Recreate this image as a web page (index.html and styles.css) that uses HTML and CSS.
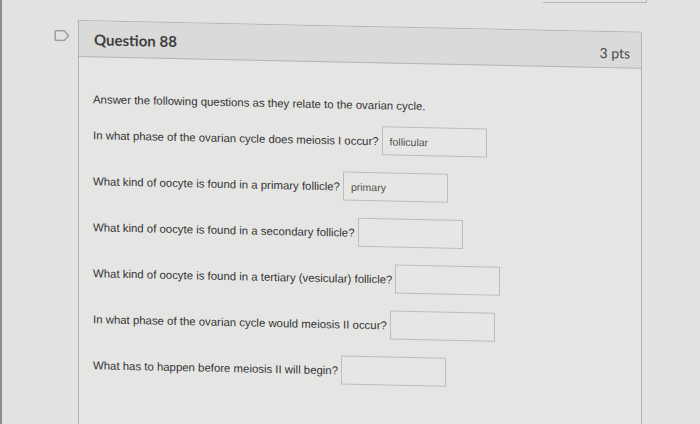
FILE: index.html
```html
<!DOCTYPE html>
<html lang="en">
<head>
<meta charset="utf-8">
<title>Question 88</title>
<link rel="stylesheet" href="styles.css">
</head>
<body>
<div class="screen">
  <div class="prev-card"></div>
  <div class="question">
    <div class="flag">
      <svg width="16" height="12" viewBox="0 0 16 12" aria-hidden="true">
        <path d="M2 1.2 H10.2 L14.6 6 L10.2 10.8 H2 Q1.2 10.8 1.2 10 V2 Q1.2 1.2 2 1.2 Z" fill="none" stroke="#9d9d9b" stroke-width="1.5" stroke-linejoin="round"/>
      </svg>
    </div>
    <div class="card">
      <div class="card-header">
        <h2 class="title">Question 88</h2>
        <span class="pts">3 pts</span>
      </div>
      <div class="card-body">
        <p class="intro">Answer the following questions as they relate to the ovarian cycle.</p>
        <div class="qa"><span class="q">In what phase of the ovarian cycle does meiosis I occur?</span><span class="answer">follicular</span></div>
        <div class="qa"><span class="q">What kind of oocyte is found in a primary follicle?</span><span class="answer">primary</span></div>
        <div class="qa"><span class="q">What kind of oocyte is found in a secondary follicle?</span><span class="answer"></span></div>
        <div class="qa"><span class="q">What kind of oocyte is found in a tertiary (vesicular) follicle?</span><span class="answer"></span></div>
        <div class="qa"><span class="q">In what phase of the ovarian cycle would meiosis II occur?</span><span class="answer"></span></div>
        <div class="qa"><span class="q">What has to happen before meiosis II will begin?</span><span class="answer"></span></div>
      </div>
    </div>
  </div>
</div>
</body>
</html>
```
FILE: styles.css
```css
html, body {
  margin: 0;
  padding: 0;
}
body {
  background: #e2e2e0;
  font-family: "Liberation Sans", Arial, sans-serif;
  color: #333333;
}
.screen {
  height: 424px;
  overflow: hidden;
  border-left: 2px solid #8e8e8c;
  box-sizing: border-box;
}
.prev-card {
  margin-left: 541px;
  width: 103px;
  height: 2px;
  border-right: 1px solid #b7b7b5;
  border-bottom: 1px solid #b7b7b5;
}
.question {
  display: flex;
  align-items: flex-start;
  margin-top: 17px;
  padding-left: 52px;
  transform: skewY(1.2deg);
  transform-origin: 78px 0;
}
.flag {
  width: 16px;
  margin-right: 8px;
  padding-top: 10px;
  line-height: 0;
}
.card {
  width: 564px;
  min-height: 430px;
  box-sizing: border-box;
  border: 1px solid #b3b3b1;
  background: #e5e5e3;
}
.card-header {
  height: 35px;
  background: #dadad8;
  border-bottom: 1px solid #b5b5b3;
  display: flex;
  align-items: center;
  justify-content: space-between;
  padding: 0 11px 0 15px;
}
.title {
  margin: 0;
  font-family: Lato, "Liberation Sans", sans-serif;
  font-weight: 700;
  font-size: 15px;
  color: #3f3f3f;
}
.pts {
  font-family: Lato, "Liberation Sans", sans-serif;
  font-size: 14px;
  color: #4a4a4a;
  padding-top: 6px;
}
.card-body {
  padding: 35px 0 0 14px;
}
.intro {
  margin: 0 0 14px;
  font-size: 11.4px;
  line-height: 14px;
}
.qa {
  display: flex;
  align-items: center;
  gap: 3px;
  height: 29px;
  margin-bottom: 17px;
  font-size: 11.4px;
}
.answer {
  width: 105px;
  height: 29px;
  box-sizing: border-box;
  border: 1px solid #bdbdbb;
  background: #e6e6e4;
  display: flex;
  align-items: center;
  padding-left: 7px;
  font-size: 10.5px;
  color: #4e4e4e;
}
```
